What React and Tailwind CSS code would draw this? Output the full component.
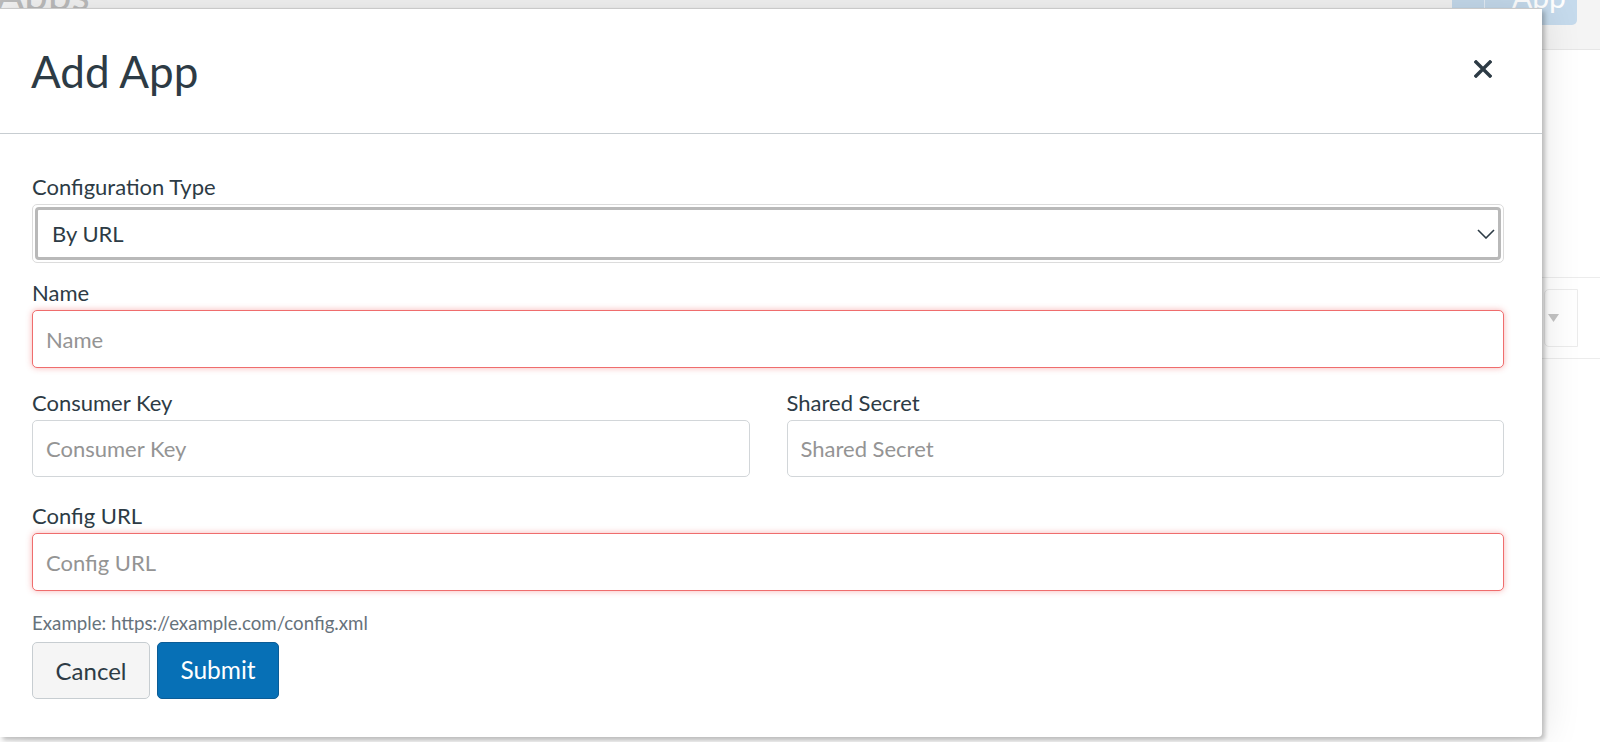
function Field({ label, placeholder, invalid }) {
  return (
    <div>
      <label className="mb-[5px] block text-[22px] leading-[25px] text-[#2d3b45]">{label}</label>
      <input
        placeholder={placeholder}
        className={
          invalid
            ? "block h-[58px] w-full rounded-[5px] border border-[#ef6d6d] bg-white px-[13px] text-[22px] text-[#2d3b45] shadow-[0_0_6px_rgba(238,90,90,0.45)] outline-none placeholder:text-[#949494]"
            : "block h-[57px] w-full rounded-[5px] border border-[#d2d6d9] bg-white px-[13px] text-[22px] text-[#2d3b45] outline-none placeholder:text-[#949494]"
        }
      />
    </div>
  );
}

function Backdrop() {
  return (
    <div className="flex h-full w-full flex-col bg-white">
      <div className="flex h-[50px] items-start justify-between border-b border-[#e6e6e6] bg-[#f4f4f4]">
        <h1 className="-ml-[4px] -mt-[27px] text-[42px] leading-[42px] text-[#bdbdbd]">Apps</h1>
        <div className="mr-[23px] flex h-[25px] w-[125px] items-start overflow-hidden rounded-b-[5px] bg-[#c5daec]">
          <span className="h-full w-[33px] border-r border-[#e4eef7]" />
          <span className="-mt-[21px] pl-[27px] text-[30px] leading-[34px] text-white">App</span>
        </div>
      </div>
      <div className="mt-[227px] flex h-[82px] items-center justify-end border-y border-[#ececec] pr-[22px]">
        <div className="flex h-[58px] w-[34px] items-center rounded-l-[5px] border border-[#ececec] pl-[3px]">
          <svg width="11" height="8" viewBox="0 0 11 8">
            <path d="M0 0h11L5.5 8z" fill="#c4c4c4" />
          </svg>
        </div>
      </div>
    </div>
  );
}

export default function App() {
  return (
    <div className="relative h-[742px] w-[1600px] overflow-hidden font-['Lato','Liberation_Sans',sans-serif]">
      <Backdrop />

      <div className="absolute left-0 top-[8px] h-[729px] w-[1542px] rounded-br-[4px] border-t border-[#c9c9c9] bg-white shadow-[3px_3px_4px_rgba(0,0,0,0.22),0_0_40px_rgba(0,0,0,0.12)]">
        <div className="flex h-[125px] items-center justify-between border-b border-[#c7cdd1] pl-[31px] pr-[50px]">
          <h2 className="text-[44px] leading-[52px] text-[#2d3b45]">Add App</h2>
          <svg width="18" height="18" viewBox="0 0 18 18" className="-mt-[4px]">
            <path d="M2 2l14 14M16 2L2 16" stroke="#2d3b45" strokeWidth="3.4" strokeLinecap="square" />
          </svg>
        </div>

        <div className="pl-[32px] pr-[38px] pt-[40px]">
          <label className="mb-[5px] block text-[22px] leading-[25px] text-[#2d3b45]">Configuration Type</label>
          <div className="h-[59px] rounded-[5px] border border-[#dcdcdc] p-[2px]">
            <div className="flex h-full items-center justify-between rounded-[4px] border-[3px] border-[#b9b9b9] pl-[14px] pr-[3px]">
              <span className="text-[22px] text-[#2d3b45]">By URL</span>
              <svg width="18" height="10" viewBox="0 0 18 10" fill="none">
                <path d="M1 1l8 8 8-8" stroke="#2d3b45" strokeWidth="1.6" />
              </svg>
            </div>
          </div>

          <div className="mt-[17px]">
            <Field label="Name" placeholder="Name" invalid />
          </div>

          <div className="mt-[22px] grid grid-cols-2 gap-x-[37px]">
            <Field label="Consumer Key" placeholder="Consumer Key" />
            <Field label="Shared Secret" placeholder="Shared Secret" />
          </div>

          <div className="mt-[26px]">
            <Field label="Config URL" placeholder="Config URL" invalid />
          </div>

          <p className="mt-[21px] text-[18.7px] leading-[22px] text-[#66727b]">Example: https://example.com/config.xml</p>

          <div className="mt-[8px] flex gap-[7px]">
            <button className="h-[57px] w-[118px] rounded-[5px] border border-[#c7cdd1] bg-[#f5f5f5] text-[24px] text-[#2d3b45]">
              Cancel
            </button>
            <button className="h-[57px] w-[122px] rounded-[5px] border border-[#0b5c96] bg-[#0770b6] text-[24.5px] text-white">
              Submit
            </button>
          </div>
        </div>
      </div>
    </div>
  );
}
